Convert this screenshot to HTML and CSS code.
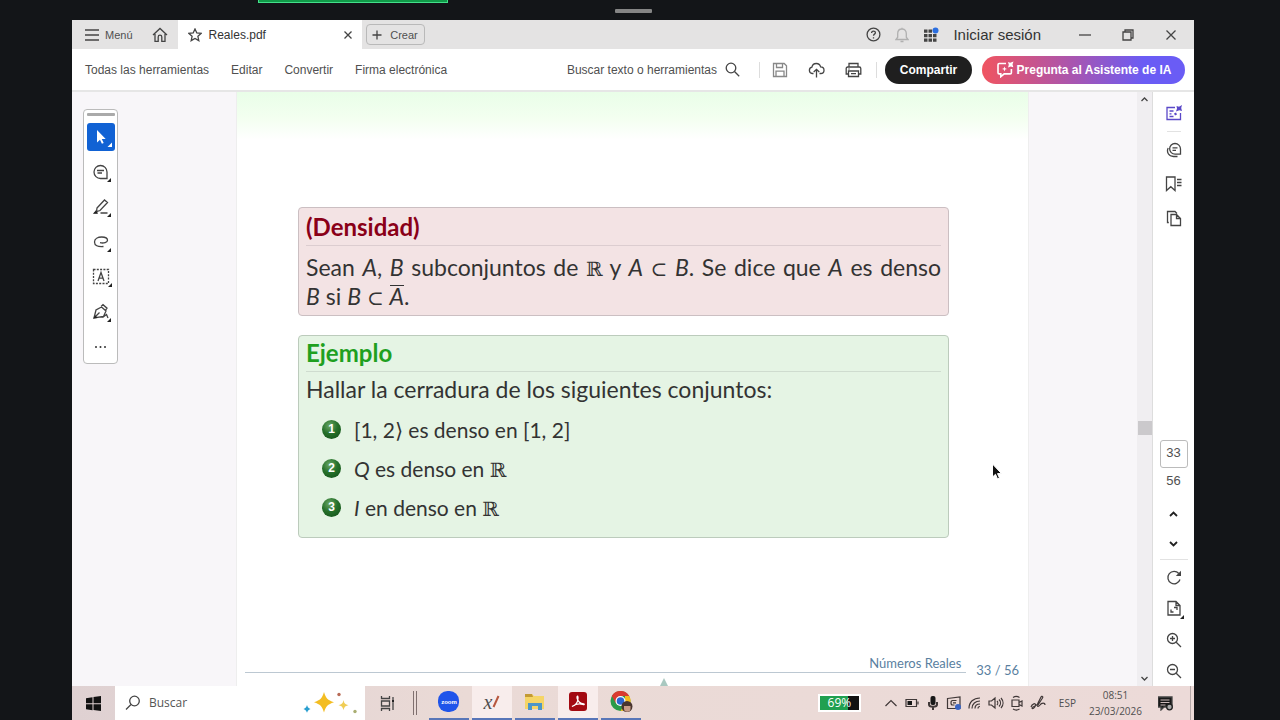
FILE: index.html
```html
<!DOCTYPE html>
<html lang="es">

<head>
    <meta charset="UTF-8">
    <title>Reales.pdf</title>
    <link rel="stylesheet" href="styles.css">
</head>

<body>
    <div class="share-strip">
        <div class="share-bar"></div>
        <div class="share-grip"></div>
    </div>
    <div class="screen">
        <header class="tabs">
            <button class="menu">
                <svg width="14" height="12" viewBox="0 0 14 12"><path d="M0 1h14M0 6h14M0 11h14"/></svg>
                Menú
            </button>
            <button class="home" aria-label="Inicio">
                <svg width="16" height="16" viewBox="0 0 16 16"><path d="M1 8l7-6.5L15 8M3 7v7.3h3.2V10a1.8 1.8 0 0 1 3.600 0v4.300H13V7"/></svg>
            </button>
            <div class="tab">
                <svg width="14" height="14" viewBox="0 0 14 14"><path d="M7 1l1.800 4 4.300.400-3.200 2.900.900 4.300L7 10.400l-3.800 2.200.900-4.300L.900 5.400 5.200 5z"/></svg>
                <span class="tab-name">Reales.pdf</span>
                <button class="icon" aria-label="Cerrar pestaña">
                    <svg width="8" height="8" viewBox="0 0 8 8"><path d="M.5.5l7 7M7.500.5l-7 7"/></svg>
                </button>
            </div>
            <button class="create">
                <svg width="10" height="10" viewBox="0 0 10 10"><path d="M5 .5v9M.5 5h9"/></svg>
                Crear
            </button>
            <div class="account">
                <button class="icon" aria-label="Ayuda">
                    <svg width="15" height="15" viewBox="0 0 15 15"><circle cx="7.500" cy="7.500" r="6.400"/><path d="M5.600 6c0-2.600 3.800-2.500 3.800-.2 0 1.300-1.900 1.400-1.900 2.900M7.500 10.200v1.200"/></svg>
                </button>
                <button class="icon faint" aria-label="Notificaciones">
                    <svg width="14" height="16" viewBox="0 0 14 16"><path d="M1 12.500h12l-1.700-2.300V6.500C11.300 3.800 9.600 2 7 2S2.700 3.800 2.700 6.500v3.700zM5.500 14.500h3M7 .8V2"/></svg>
                </button>
                <button class="icon" aria-label="Aplicaciones">
                    <svg width="16" height="16" viewBox="0 0 16 16"><g fill="#444" stroke="none"><path d="M1 2.500h3.500v3.200H1zM5.500 2.500H9v3.200H5.500zM1 7h3.500v3.200H1zM5.500 7H9v3.200H5.500zM10 7h3.500v3.200H10zM1 11.500h3.500v3.200H1zM5.500 11.500H9v3.200H5.500zM10 11.500h3.500v3.200H10z"/><circle cx="12.500" cy="3.500" r="3" fill="#2b6fe0"/></g></svg>
                </button>
                <button class="login">Iniciar sesión</button>
            </div>
            <div class="window-buttons">
                <button class="icon" aria-label="Minimizar"><svg width="12" height="12" viewBox="0 0 12 12"><path d="M0 6h12"/></svg></button>
                <button class="icon" aria-label="Restaurar"><svg width="12" height="12" viewBox="0 0 12 12"><path d="M1 3h8v8H1zM3 3V1h8v8H9"/></svg></button>
                <button class="icon" aria-label="Cerrar"><svg width="12" height="12" viewBox="0 0 12 12"><path d="M1.500 1.500l9 9M10.500 1.500l-9 9"/></svg></button>
            </div>
        </header>

        <nav class="toolbar">
            <a href="#">Todas las herramientas</a>
            <a href="#">Editar</a>
            <a href="#">Convertir</a>
            <a href="#">Firma electrónica</a>
            <button class="find">
                Buscar texto o herramientas
                <svg width="15" height="15" viewBox="0 0 15 15"><circle cx="6" cy="6" r="4.800"/><path d="M9.500 9.500l4.700 4.700"/></svg>
            </button>
            <div class="file-tools">
                <button class="icon pale" aria-label="Guardar">
                    <svg width="16" height="16" viewBox="0 0 16 16"><path d="M1.500 1.500h10.700l2.300 2.300v10.700h-13zM4.500 1.500v4h6v-4M4 14.500V9.200h8v5.300"/></svg>
                </button>
                <button class="icon" aria-label="Cargar">
                    <svg width="17" height="16" viewBox="0 0 17 16"><path d="M5.500 11.500H4.200a3.200 3.200 0 0 1-.3-6.300C4.300 3 6 1.500 8.300 1.500c2.200 0 3.800 1.300 4.300 3.300 2 .1 3.400 1.500 3.400 3.400s-1.400 3.300-3.300 3.300h-1.200M8.500 15.500V7.500M5.700 10l2.800-2.700 2.800 2.700"/></svg>
                </button>
                <button class="icon" aria-label="Imprimir">
                    <svg width="17" height="16" viewBox="0 0 17 16"><path d="M4 5V1.500h9V5M3.500 12H1.200V6.500C1.200 5.500 1.700 5 2.700 5h11.600c1 0 1.500.5 1.500 1.500V12h-2.300M3.500 9h10v5.500h-10zM6 11.700h5M3.500 7h1"/></svg>
                </button>
            </div>
            <button class="share">Compartir</button>
            <button class="assistant">
                <svg width="18" height="17" viewBox="0 0 18 17"><path d="M10 2.500H3.200c-.8 0-1.200.4-1.200 1.200v8c0 .8.4 1.200 1.200 1.200h1.600v2.800l3.400-2.800h6c.8 0 1.200-.4 1.200-1.200V8"/><path d="M12 1l2.200.8L17.500.5l-1 2.800.8 3-2.600-.8-2.700 1 .8-2.800zM8.500 5.500l.7 1.700 1.800.7-1.800.7-.7 1.800-.7-1.800-1.800-.7 1.800-.7z" fill="#fff" stroke="none"/></svg>
                Pregunta al Asistente de IA
            </button>
        </nav>

        <main class="viewer">
            <aside class="margin">
                <div class="palette">
                    <span class="grip"></span>
                    <button class="tool selected" aria-label="Seleccionar">
                        <svg width="28" height="28" viewBox="0 0 28 28"><path d="M10 7v12.500l3-2.700 1.900 4 1.800-.9-1.900-3.800h3.900z" fill="#fff" stroke="none"/><path d="M25 19.500v4.500h-4.500z" fill="#fff" stroke="none"/></svg>
                    </button>
                    <button class="tool" aria-label="Comentar">
                        <svg width="28" height="28" viewBox="0 0 28 28"><path d="M13.500 7.500a6.500 6.500 0 1 0 0 13H20V14a6.500 6.500 0 0 0-6.500-6.500zM10 12.500h7M10.500 15h4.500"/><path class="corner" d="M24 20v4h-4z"/></svg>
                    </button>
                    <button class="tool" aria-label="Resaltar">
                        <svg width="28" height="28" viewBox="0 0 28 28"><path d="M10 15l7.500-8 3 2.500-7.500 8-3.500 1zM9.500 17.500l-2 2.500h3M13.500 20h7"/><path class="corner" d="M24 20v4h-4zM6 20.500l3-2.500 2 2.500z"/></svg>
                    </button>
                    <button class="tool" aria-label="Dibujar">
                        <svg width="28" height="28" viewBox="0 0 28 28"><path d="M16.500 18.500c-6 .5-9-1-9-4.500 0-3.300 3.500-5 7.300-5 4 0 5.700 1.500 5.700 3.200 0 2.200-3.700 3.300-7.500 2.500"/><path class="corner" d="M24 20v4h-4z"/></svg>
                    </button>
                    <button class="tool" aria-label="Agregar texto">
                        <svg width="28" height="28" viewBox="0 0 28 28"><rect x="6.500" y="6.500" width="15" height="14" stroke-dasharray="2 1.300"/><path d="M11 18l3-8.500 3 8.500M12 15.200h4"/><path class="corner" d="M25 20v4h-4z"/></svg>
                    </button>
                    <button class="tool" aria-label="Firmar">
                        <svg width="28" height="28" viewBox="0 0 28 28"><path d="M7 20l2-8 5.500-3 4.500 4-2.500 5.500zM7.500 19.500l5-5M14 8.500l2-1.800 4 3.500-1.700 2.300M15.500 19.500l4-3 1.500 3.500"/><path class="corner" d="M24 20v4h-4zM6 20.500l2.500-3 2 2.500z"/></svg>
                    </button>
                    <button class="tool" aria-label="Más">
                        <svg width="28" height="28" viewBox="0 0 28 28"><g fill="#333" stroke="none"><circle cx="9" cy="14" r="1"/><circle cx="13.500" cy="14" r="1"/><circle cx="18" cy="14" r="1"/></g></svg>
                    </button>
                </div>
            </aside>

            <article class="slide">
                <section class="block red">
                    <h2>(Densidad)</h2>
                    <p class="full">Sean <i>A</i>, <i>B</i> subconjuntos de <b class="bb">ℝ</b> y <i>A</i> <span class="rel">⊂</span> <i>B</i>. Se dice que <i>A</i> es denso</p>
                    <p><i>B</i> si <i>B</i> <span class="rel">⊂</span> <i class="closure">A</i>.</p>
                </section>
                <section class="block green">
                    <h2>Ejemplo</h2>
                    <p>Hallar la cerradura de los siguientes conjuntos:</p>
                    <ol>
                        <li><span class="ball">1</span><span>[1, 2⟩ es denso en [1, 2]</span></li>
                        <li><span class="ball">2</span><span><i>Q</i> es denso en <b class="bb">ℝ</b></span></li>
                        <li><span class="ball">3</span><span><i>I</i> en denso en <b class="bb">ℝ</b></span></li>
                    </ol>
                </section>
                <footer class="slide-foot">
                    <span class="slide-title">Números Reales</span>
                    <span class="slide-count">33 / 56</span>
                </footer>
                <svg class="marker" width="8" height="8" viewBox="0 0 8 8"><path d="M4 0l4 8H0z"/></svg>
                <svg class="pointer" width="12" height="18" viewBox="0 0 12 18"><path d="M1.500 1v13l3-2.700 2 4.700 2-.9-2-4.500h4z"/></svg>
            </article>

            <div class="scrollbar">
                <svg width="7" height="5" viewBox="0 0 7 5"><path d="M.5 4l3-3 3 3"/></svg>
                <span class="thumb"></span>
                <svg width="7" height="5" viewBox="0 0 7 5"><path d="M.5 1l3 3 3-3"/></svg>
            </div>

            <aside class="rail">
                <button class="violet" aria-label="Asistente">
                    <svg width="18" height="18" viewBox="0 0 18 18"><path d="M10 3.500H2v12h13.500V9M4.500 7h4M4.500 9.800h2M4.500 12.500h4"/><path d="M11.500 2l2.500.8L17 1l-.8 3 .8 3-2.700-.8L11 7.500l1-3zM9 9.500l2-1 1 2-2 1z" fill="#5a48c8" stroke="none"/></svg>
                </button>
                <hr>
                <button aria-label="Comentarios">
                    <svg width="16" height="16" viewBox="0 0 16 16"><path d="M9 1.500a5.300 5.300 0 1 0 0 10.700h5.500V7A5.500 5.500 0 0 0 9 1.500zM6.500 5.800h5M6.500 8.300h3.500M2.200 6c-2 4 .5 8.500 5.300 8.500h4"/></svg>
                </button>
                <button aria-label="Marcadores">
                    <svg width="17" height="16" viewBox="0 0 17 16"><path d="M1.500 1h8.500v13.500l-4.200-3.800-4.300 3.800zM12 3.500h4.500M12 6.500h4.500M12 9.500h4.500"/></svg>
                </button>
                <button aria-label="Páginas">
                    <svg width="16" height="17" viewBox="0 0 16 17"><path d="M5 4.500h5.500l4 4v7H5zM10.500 4.500v4h4M2.800 12.500H1.500v-11h7.500l2 2"/></svg>
                </button>
                <input class="page-number" type="text" value="33" aria-label="Página">
                <span class="page-total">56</span>
                <button class="step" aria-label="Página anterior"><svg width="9" height="6" viewBox="0 0 9 6"><path d="M1 5l3.500-3.500L8 5"/></svg></button>
                <button class="step" aria-label="Página siguiente"><svg width="9" height="6" viewBox="0 0 9 6"><path d="M1 1l3.500 3.500L8 1"/></svg></button>
                <hr class="wide">
                <button class="zoom" aria-label="Girar">
                    <svg width="16" height="16" viewBox="0 0 16 16"><path d="M12.800 3.500A6.200 6.200 0 1 0 14 9.500"/><path d="M15 .8v5.200h-5.200z" fill="#444" stroke="none"/></svg>
                </button>
                <button class="zoom" aria-label="Ajustar">
                    <svg width="20" height="20" viewBox="0 0 20 20"><path d="M4 2.500h8l4 4V16H4zM12 2.500v4h4M10 8.500h3V11M7 10.500V13h2.500"/><path class="corner" d="M20 16v4h-4z"/></svg>
                </button>
                <button class="zoom" aria-label="Acercar">
                    <svg width="16" height="16" viewBox="0 0 16 16"><circle cx="6.500" cy="6.500" r="5"/><path d="M10.200 10.200L15 15M4 6.500h5M6.500 4v5"/></svg>
                </button>
                <button class="zoom" aria-label="Alejar">
                    <svg width="16" height="16" viewBox="0 0 16 16"><circle cx="6.500" cy="6.500" r="5"/><path d="M10.200 10.200L15 15M4 6.500h5"/></svg>
                </button>
            </aside>
        </main>

        <footer class="taskbar">
            <button class="start" aria-label="Inicio">
                <svg width="15" height="15" viewBox="0 0 15 15"><path d="M0 2.200l6.500-1v6H0zM7.500 1L15 0v7.200H7.500zM0 8.200h6.500v6L0 13.200zM7.500 8.200H15V15l-7.500-1z"/></svg>
            </button>
            <label class="search">
                <svg width="16" height="16" viewBox="0 0 16 16"><circle cx="9.500" cy="6" r="4.800"/><path d="M6 9.500L1 14.500"/></svg>
                <input type="text" placeholder="Buscar">
                <svg width="54" height="22" viewBox="0 0 54 22"><g stroke="none"><path d="M21 0c2 6.500 3.500 8 10 10.200-6.500 2.300-8 3.800-10 10.300-2-6.500-3.500-8-10-10.300C17.500 8 19 6.500 21 0z" fill="#f3bd22"/><path d="M40.500 8c.8 3.500 1.500 4.300 5 5.200-3.500.8-4.200 1.600-5 5-.8-3.400-1.500-4.200-5-5 3.500-.9 4.200-1.700 5-5.200z" fill="#f0cd55"/><path d="M4 13c.8 2.300 1.200 2.800 3.500 4-2.300 1-2.700 1.500-3.500 3.800C3.200 18.500 2.800 18 .5 17c2.300-1.200 2.700-1.700 3.500-4z" fill="#2a9fd0"/><circle cx="36" cy="2.500" r="1.700" fill="#b86a55"/><circle cx="52" cy="19.500" r="1.700" fill="#a9ae72"/></g></svg>
            </label>
            <button class="task-view" aria-label="Vista de tareas">
                <svg width="16" height="15" viewBox="0 0 16 15"><path d="M1.500 0v2.500h8V0M1.500 5h8v5h-8zM1.500 15v-2.500h8V15M13 1v3M13 7v7"/><path d="M12 4h2v2.500h-2z" fill="#222" stroke="none"/></svg>
            </button>
            <span class="bars"></span>
            <div class="apps">
                <button class="app" aria-label="Zoom">
                    <svg width="22" height="22" viewBox="0 0 22 22"><rect x="0" y="0" width="21" height="21" rx="9.500" fill="#1f54ea"/><text x="11" y="13" text-anchor="middle" class="zoom-word">zoom</text></svg>
                </button>
                <button class="app open x-app" aria-label="Editor"><i>x</i><svg width="8" height="14" viewBox="0 0 8 14"><path d="M1.500 12l5-11"/></svg></button>
                <button class="app" aria-label="Explorador de archivos">
                    <svg width="22" height="20" viewBox="0 0 22 20"><path d="M1 2h7l2 2h10v13H1z" fill="#f5d566"/><path d="M1 2h7l1 3H1z" fill="#c39a35"/><path d="M4 18v-7h14v7h-4v-4H8v4z" fill="#4c96c8"/></svg>
                </button>
                <button class="app open" aria-label="Acrobat">
                    <svg width="20" height="20" viewBox="0 0 20 20"><rect x="1" y="0" width="18" height="19" rx="3" fill="#a30a12"/><path d="M4 14.500c3-1 6-4 6-8.500C10 3 8.500 4 9.200 6.500c.8 3 3 5 6.500 5.500 1 .2.500 1-1 .500-3-1-7-.5-10.700 2z" fill="none" stroke="#fff" stroke-width="1.300"/></svg>
                </button>
                <button class="app" aria-label="Chrome">
                    <svg width="23" height="22" viewBox="0 0 23 22"><circle cx="10.500" cy="10" r="10" fill="#2a9b49"/><path d="M1.800 5A10 10 0 0 1 19.200 5H10.500L6 12.500z" fill="#d93a30"/><path d="M19.200 5A10 10 0 0 1 10.500 20L15 12V5z" fill="#f3bd1e"/><circle cx="10.500" cy="10" r="5" fill="#fff"/><circle cx="10.500" cy="10" r="3.800" fill="#2c66d0"/><circle cx="17" cy="15.500" r="5.500" fill="#49352f"/><path d="M14 15h6.500v2.500a3.200 3.200 0 0 1-6.500 0z" fill="#c89c88"/></svg>
                </button>
            </div>
            <span class="battery">69%</span>
            <div class="tray">
                <svg viewBox="0 0 16 16"><path d="M2.500 11L8 5.500l5.500 5.500"/></svg>
                <svg viewBox="0 0 16 16"><path d="M2 4.500h10.500v7H2zM14 6.500v3"/><path d="M3.500 6H8v4H3.500z" class="solid"/></svg>
                <svg viewBox="0 0 16 16"><rect x="5.500" y="1" width="5" height="9" rx="2" class="solid"/><path d="M4 7v2.500c0 3 8 3 8 0V7M8 12v3" stroke-width="2"/></svg>
                <svg viewBox="0 0 16 16"><path d="M1.500 3.500L14 2v11.500H1.500zM10.500 5.500h-4C4.500 5.500 4.500 10 6.500 10h2M7 7.800h3"/><circle cx="12" cy="12" r="3" fill="#3c66c4" stroke="none"/></svg>
                <svg viewBox="0 0 16 16"><path d="M2 13.500C2 7 6.500 3 13 3M5 13.500c0-4.500 3.500-7.500 8-7.500M8 13.500c0-2.800 2-4.500 5-4.500M11 13.500c0-1.200.8-2 2-2"/></svg>
                <svg viewBox="0 0 16 16"><path d="M1 6h2.500L7 3v10L3.500 10H1zM9 6c1 1 1 3 0 4M11 4.500c2 2 2 5 0 7M13 3c2.700 3 2.700 7 0 10"/></svg>
                <svg viewBox="0 0 16 16"><path d="M3 5h7v6.500H3zM10 7.500l3-1.500v5l-3-1.500M4 2.500c2-1.300 4.500-1.300 6.500 0M4 14c2 1.300 4.500 1.300 6.500 0"/></svg>
                <svg viewBox="0 0 16 16"><path d="M1 12c1-3.500 5-4.500 4.500-1.500-.5 2.500-3.500 4-3.500 2.500s4-1.500 5.500-4l3.500-7c1-1.500 2.500-.5 1.500 1L8 10c-1 2 .5 2 2 0 1.500-2.500 5-2.500 5 0"/></svg>
            </div>
            <span class="lang">ESP</span>
            <time class="clock"><span>08:51</span><span>23/03/2026</span></time>
            <button class="notices" aria-label="Centro de notificaciones">
                <svg width="15" height="15" viewBox="0 0 15 15"><path d="M0 1h14v10H6l-3 3v-3H0z" fill="#181818"/><path d="M2.500 4h9M2.500 6.500h9M2.500 9h5" stroke="#cbb" stroke-width="1"/><circle cx="11.500" cy="11" r="2.800" fill="#aaa" stroke="#222"/></svg>
            </button>
        </footer>
    </div>
</body>

</html>
```

FILE: styles.css
```css
* {
    box-sizing: border-box;
}

body {
    margin: 0;
    height: 100vh;
    display: flex;
    flex-direction: column;
    overflow: hidden;
    background: #131518;
    color: #505050;
    font: 12px/16px "Liberation Sans", Arial, sans-serif;
}

button,
input {
    margin: 0;
    padding: 0;
    border: 0;
    background: none;
    color: inherit;
    font: inherit;
}

button {
    display: flex;
    align-items: center;
    justify-content: center;
    white-space: nowrap;
}

svg {
    flex: none;
    fill: none;
    stroke: #444;
    stroke-width: 1.3;
}

.corner {
    fill: #222;
    stroke: none;
}

/* barra superior de la reunión */
.share-strip {
    position: relative;
    flex: none;
    height: 20px;
    margin: 0 86px 0 72px;
}

.share-bar {
    width: 190px;
    height: 3px;
    margin-left: 186px;
    background: #109a48;
    border: 1px solid #43e08a;
    border-top: 0;
}

.share-grip {
    position: absolute;
    top: 9px;
    left: 50%;
    width: 37px;
    height: 4px;
    margin-left: -18px;
    background: #858585;
    border-radius: 1px;
}

.screen {
    flex: 1;
    min-height: 0;
    display: flex;
    flex-direction: column;
    margin: 0 86px 0 72px;
    background: #fff;
}

/* pestañas */
.tabs {
    flex: none;
    display: flex;
    align-items: center;
    height: 29px;
    background: #e4e3e3;
}

.menu {
    gap: 6px;
    padding-left: 13px;
    font-size: 11px;
}

.home {
    width: 45px;
    padding-left: 10px;
}

.tab {
    display: flex;
    align-items: center;
    align-self: stretch;
    gap: 7px;
    width: 184px;
    padding: 0 10px;
    background: #fff;
}

.tab-name {
    flex: 1;
    color: #333;
    font-size: 12px;
}

.create {
    gap: 8px;
    width: 59px;
    height: 21px;
    margin-left: 4px;
    border: 1px solid #b9b9b9;
    border-radius: 4px;
    font-size: 11px;
}

.account {
    display: flex;
    align-items: center;
    gap: 14px;
    margin-left: auto;
}

.login {
    color: #333;
    font-size: 15px;
}

.pale svg {
    stroke: #888;
}

.faint svg {
    stroke: #b0b0b0;
}

.window-buttons {
    display: flex;
    gap: 31px;
    padding: 0 17px 0 38px;
}

/* herramientas */
.toolbar {
    flex: none;
    display: flex;
    align-items: center;
    height: 43px;
    padding: 0 9px 0 13px;
    border-bottom: 2px solid #e6e6e6;
}

.toolbar a {
    margin-right: 22px;
    color: inherit;
    text-decoration: none;
    white-space: nowrap;
}

.find {
    gap: 8px;
    margin-left: auto;
}

.file-tools {
    display: flex;
    gap: 20px;
    height: 16px;
    margin: 0 8px 0 19px;
    padding: 0 14px 0 12px;
    border: solid #ddd;
    border-width: 0 1px;
}

.share,
.assistant {
    height: 28px;
    border-radius: 14px;
    color: #fff;
    font-weight: bold;
}

.share {
    width: 87px;
    background: #1f1f1f;
}

.assistant {
    gap: 3px;
    width: 203px;
    margin-left: 10px;
    background: linear-gradient(90deg, #f05460, #a855b0 45%, #6a5cf5 80%);
}

.assistant svg {
    stroke: #fff;
    stroke-width: 1.6;
}

/* visor */
.viewer {
    flex: 1;
    min-height: 0;
    display: flex;
    background: #f8f6f9;
}

.margin {
    flex: none;
    width: 164px;
    padding: 17px 11px;
}

.palette {
    display: flex;
    flex-direction: column;
    align-items: center;
    gap: 7px;
    width: 35px;
    padding: 3px 0 2px;
    background: #fff;
    border: 1px solid #bbb;
    border-radius: 4px;
}

.grip {
    width: 28px;
    height: 3px;
    background: #aaa;
    border-radius: 1px;
}

.tool {
    width: 28px;
    height: 28px;
    border-radius: 3px;
}

.selected {
    background: #1162d4;
}

.slide {
    position: relative;
    flex: 1;
    min-width: 0;
    display: flex;
    flex-direction: column;
    margin-right: 108px;
    padding: 115px 79px 0 61px;
    background: #fff linear-gradient(#e9fee8, #f3fff0 26px, #fff 48px) no-repeat;
    border: solid #eee;
    border-width: 0 1px;
    color: #333;
    font: 23px/29px Lato, sans-serif;
}

.block {
    padding: 4px 7px;
    border: 1px solid #cbbfc2;
    border-radius: 4px;
}

.block h2 {
    margin: 0 0 7px;
    padding-bottom: 4px;
    border-bottom: 1px solid #dccdd0;
    font-size: 24px;
    line-height: 29px;
}

.block p {
    margin: 0;
    white-space: nowrap;
}

.block .full {
    text-align-last: justify;
}

.red {
    background: #f3e3e4;
}

.red h2 {
    color: #8a0018;
}

.green {
    margin-top: 19px;
    padding: 2px 7px 10px;
    background: #e5f4e4;
    border-color: #bccbbc;
}

.green h2 {
    margin-bottom: 3px;
    border-color: #cfdccf;
    color: #1fa01f;
}

.bb,
.rel {
    font: 20px/20px "DejaVu Serif", serif;
}

.closure {
    display: inline-block;
    border-top: 1px solid #333;
    line-height: 20px;
}

.block ol {
    margin: 6px 0 0;
    padding: 0 0 0 16px;
    list-style: none;
    font-size: 21px;
}

.block li {
    display: flex;
    align-items: center;
    gap: 13px;
    height: 39px;
}

.ball {
    flex: none;
    width: 19px;
    height: 19px;
    border-radius: 50%;
    background: radial-gradient(circle at 40% 30%, #6ba866, #26702a 45%, #0f4c16);
    color: #fff;
    font: bold 12px/19px "Liberation Sans", sans-serif;
    text-align: center;
}

.slide-foot {
    display: flex;
    gap: 10px;
    margin: auto -70px 7px -53px;
    color: #5a7f9f;
    font-size: 13px;
    line-height: 16px;
}

.slide-title {
    flex: 1;
    margin-bottom: 6px;
    padding: 0 5px 1px 0;
    border-bottom: 1px solid #bcc8d2;
    text-align: right;
}

.slide-count {
    padding-top: 7px;
}

.marker {
    position: absolute;
    bottom: 0;
    left: 53.5%;
    fill: #a9c8c0;
    stroke: none;
}

.pointer {
    position: absolute;
    top: 371px;
    right: 25px;
    fill: #111;
    stroke: #fff;
    stroke-width: 1;
}

.scrollbar {
    flex: none;
    display: flex;
    flex-direction: column;
    align-items: center;
    width: 15px;
    padding: 5px 0;
    background: #f0eef1;
}

.thumb {
    width: 14px;
    height: 14px;
    margin: 319px 0 auto;
    background: #cbc9cc;
}

.rail {
    flex: none;
    display: flex;
    flex-direction: column;
    align-items: center;
    width: 42px;
    background: #fff;
    border-left: 1px solid #ddd;
}

.rail button {
    width: 34px;
    height: 34px;
}

.rail .violet {
    height: 39px;
    padding-top: 3px;
}

.violet svg {
    stroke: #5a48c8;
}

.rail hr {
    width: 14px;
    height: 1px;
    margin: 0 0 1px;
    border: 0;
    background: #e2e2e2;
}

.rail .wide {
    width: 28px;
    margin-bottom: 2px;
}

.page-number {
    width: 28px;
    height: 28px;
    margin-top: auto;
    padding-bottom: 3px;
    border: 1px solid #bbb;
    border-radius: 3px;
    font-size: 13px;
    text-align: center;
}

.page-total {
    padding: 5px 0 10px;
    font-size: 13px;
}

.rail .step {
    height: 30px;
}

.step svg {
    stroke: #222;
    stroke-width: 1.8;
}

.rail .zoom {
    height: 31px;
}

/* barra de tareas */
.taskbar {
    flex: none;
    display: flex;
    align-items: center;
    height: 34px;
    background: linear-gradient(90deg, #dfd1d2, #eadad6 35%, #ecdad8);
    font-family: "Open Sans", "Noto Sans", sans-serif;
}

.start {
    width: 43px;
}

.start svg {
    fill: #111;
    stroke: none;
}

.search {
    display: flex;
    align-items: center;
    align-self: stretch;
    gap: 8px;
    width: 250px;
    padding: 0 8px 0 10px;
    background: #fff;
}

.search input {
    flex: 1;
    min-width: 0;
    font-size: 12px;
}

.search input::placeholder {
    color: #555;
    opacity: 1;
}

.task-view {
    width: 45px;
}

.bars {
    width: 4px;
    height: 24px;
    margin: 0 12px 0 3px;
    border: solid #80706f;
    border-width: 0 1px;
}

.apps {
    display: flex;
    align-self: stretch;
    gap: 3px;
}

.app {
    width: 40px;
    border-bottom: 2px solid #5876b8;
}

.app svg {
    stroke: none;
}

.open {
    background: #f8edec;
}

.zoom-word {
    fill: #fff;
    font: bold 6px "Liberation Sans", sans-serif;
}

.x-app {
    font: 20px/20px "Liberation Serif", serif;
}

.x-app svg {
    stroke: #b8573e;
    stroke-width: 2;
}

.battery {
    width: 43px;
    height: 18px;
    margin-left: auto;
    background: linear-gradient(90deg, #20a050 72%, #111 72%);
    border: 2px solid #fff;
    color: #fff;
    font-size: 12px;
    line-height: 14px;
    text-align: center;
}

.tray {
    display: flex;
    gap: 5px;
    margin: 0 13px 0 22px;
}

.tray svg {
    width: 16px;
    height: 16px;
    stroke: #403838;
    stroke-width: 1.2;
}

.tray .solid {
    fill: #181818;
    stroke: none;
}

.lang {
    font-size: 10px;
}

.clock {
    display: flex;
    flex-direction: column;
    margin-left: 13px;
    font-size: 10px;
    text-align: center;
}

.notices {
    height: 34px;
    margin: 0 3px 0 16px;
    padding-right: 17px;
    border-right: 1px solid #b5a8a8;
}
```
